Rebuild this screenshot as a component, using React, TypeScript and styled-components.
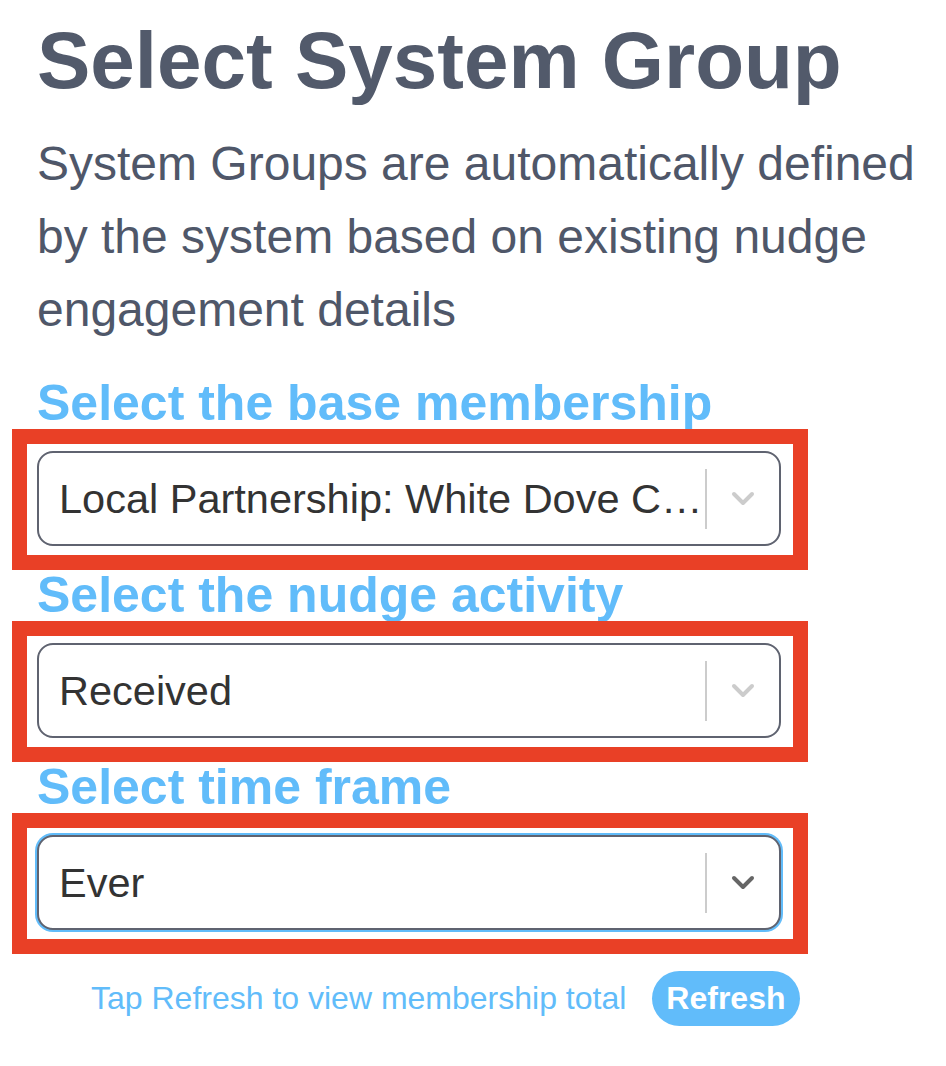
import styled, { createGlobalStyle } from "styled-components"

const GlobalStyle = createGlobalStyle`
  body {
    margin: 0;
    background: #ffffff;
    font-family: "Liberation Sans", Arial, Helvetica, sans-serif;
  }
`

const Page = styled.div`
  padding: 13px 0 40px 37px;
  box-sizing: border-box;
  width: 946px;
`

const Title = styled.h1`
  margin: 0;
  font-size: 80px;
  line-height: 96px;
  font-weight: 700;
  color: #525a6b;
  white-space: nowrap;
`

const Intro = styled.p`
  margin: 18px 0 0 0;
  width: 900px;
  font-size: 48px;
  line-height: 73px;
  color: #4f5769;
`

const Fields = styled.div`
  margin-top: 32px;
  width: 744px;
  display: flex;
  flex-direction: column;
`

const Label = styled.div`
  font-size: 50px;
  line-height: 51px;
  font-weight: 700;
  color: #61bcfa;
  white-space: nowrap;
`

// red highlight frame round each picker
const Frame = styled.div`
  margin-left: -25px;
  width: 796px;
  box-sizing: border-box;
  border: 15px solid #e94026;
  padding: 7px 12px 9px 10px;
`

const SelectBox = styled.div<{ $focused?: boolean }>`
  display: flex;
  align-items: center;
  height: 95px;
  box-sizing: border-box;
  border: 2px solid #5f6370;
  border-radius: 16px;
  background: #ffffff;
  box-shadow: ${({ $focused }) => ($focused ? "0 0 0 2px #61bcfa" : "none")};
`

const Value = styled.div`
  flex: 1;
  min-width: 0;
  padding-left: 20px;
  font-size: 41.5px;
  color: #333333;
  white-space: nowrap;
  overflow: hidden;
  text-overflow: ellipsis;
`

const Indicators = styled.div`
  display: flex;
  align-items: center;
  height: 100%;
`

const Separator = styled.span`
  width: 2px;
  height: 60px;
  background: #cccccc;
`

const Chevron = styled.div<{ $focused?: boolean }>`
  display: flex;
  align-items: center;
  padding: 0 24px 0 24px;
  color: ${({ $focused }) => ($focused ? "#666666" : "#cccccc")};
`

const Footer = styled.div`
  margin-top: 17px;
  margin-left: 54px;
  display: flex;
  align-items: center;
  gap: 26px;
`

const Hint = styled.span`
  font-size: 32px;
  color: #61bcfa;
  white-space: nowrap;
`

const RefreshButton = styled.button`
  height: 55px;
  padding: 0 14px;
  border: none;
  border-radius: 28px;
  background: #61bcfa;
  color: #ffffff;
  font-family: inherit;
  font-size: 32px;
  font-weight: 700;
  cursor: pointer;
`

const Select = ({ value, focused }: { value: string; focused?: boolean }) => (
  <Frame>
    <SelectBox $focused={focused}>
      <Value>{value}</Value>
      <Indicators>
        <Separator />
        <Chevron $focused={focused}>
          <svg width="24" height="16" viewBox="0 0 24 16">
            <polyline
              points="3,3 12,12 21,3"
              fill="none"
              stroke="currentColor"
              strokeWidth="4"
              strokeLinecap="round"
              strokeLinejoin="round"
            />
          </svg>
        </Chevron>
      </Indicators>
    </SelectBox>
  </Frame>
)

const App = () => {
  return (
    <Page>
      <GlobalStyle />
      <Title>Select System Group</Title>
      <Intro>
        System Groups are automatically defined by the system based on existing
        nudge engagement details
      </Intro>
      <Fields>
        <Label>Select the base membership</Label>
        <Select value="Local Partnership: White Dove C…" />
        <Label>Select the nudge activity</Label>
        <Select value="Received" />
        <Label>Select time frame</Label>
        <Select value="Ever" focused />
      </Fields>
      <Footer>
        <Hint>Tap Refresh to view membership total</Hint>
        <RefreshButton>Refresh</RefreshButton>
      </Footer>
    </Page>
  )
}

export default App
